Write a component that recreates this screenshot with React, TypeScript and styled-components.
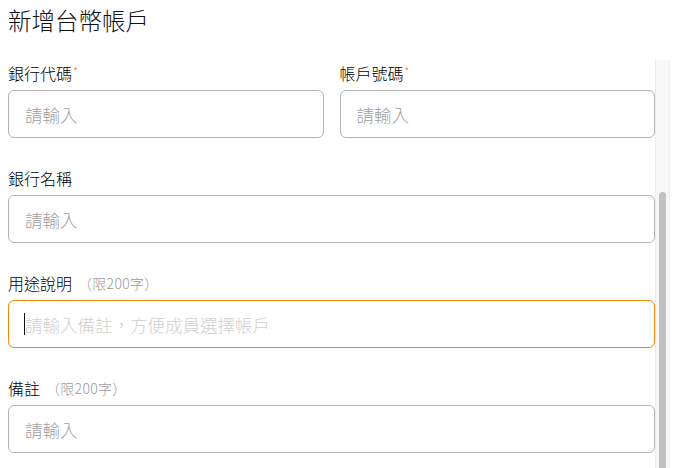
import React from 'react';
import styled, { createGlobalStyle } from 'styled-components';

const GlobalStyle = createGlobalStyle`
    html, body {
        margin: 0;
        padding: 0;
        background: #fff;
        font-family: 'Noto Sans CJK TC', 'Noto Sans', sans-serif;
        color: #222;
    }
    * {
        box-sizing: border-box;
    }
`;

const Wrapper = styled.div`
    display: flex;
    flex-direction: column;
    height: 468px;
    padding: 0 8px;
    overflow: hidden;
`;

const Header = styled.div`
    flex: 0 0 60px;
    padding-top: 4px;
`;

const Title = styled.h1`
    margin: 0;
    font-size: 23.5px;
    line-height: 32px;
    font-weight: 300;
    color: #111;
`;

const Body = styled.div`
    flex: 1;
    display: flex;
    min-height: 0;
`;

const Content = styled.div`
    flex: 1;
    padding: 2px 0 15px 0;
    overflow: hidden;
`;

const ScrollTrack = styled.div`
    flex: 0 0 15px;
    display: flex;
    flex-direction: column;
    background: #f8f8f8;
    border-left: 1px solid #ececec;
    border-right: 1px solid #f0f0f0;
`;

const ScrollThumb = styled.div<{ $offset: number }>`
    flex: 1;
    margin: ${(p) => p.$offset}px 3px 0 3px;
    background: #c1c1c1;
    border-radius: 4px 4px 0 0;
`;

const Row = styled.div`
    display: grid;
    grid-template-columns: 1fr 1fr;
    column-gap: 16px;
`;

const Field = styled.div<{ $last?: boolean }>`
    display: flex;
    flex-direction: column;
    margin-bottom: ${(p) => (p.$last ? '0' : '29px')};
`;

const Label = styled.label`
    display: flex;
    align-items: center;
    height: 22px;
    margin-bottom: 6px;
    font-size: 16px;
    line-height: 22px;
    font-weight: 300;
    color: #000;
`;

const Required = styled.span`
    align-self: flex-start;
    margin: 2px 0 0 1px;
    font-size: 11px;
    line-height: 14px;
    color: #f27a3c;
`;

const Hint = styled.span`
    margin-left: 6px;
    font-size: 14px;
    font-weight: 300;
    letter-spacing: 0.3px;
    color: #9a9a9a;
`;

const InputBox = styled.div<{ $focused?: boolean }>`
    position: relative;
    height: 48px;
    border: 1px solid ${(p) => (p.$focused ? '#ef8a0c' : '#b4b4b4')};
    border-radius: 6px;
    background: #fff;
`;

const Input = styled.input<{ $light?: boolean }>`
    width: 100%;
    height: 100%;
    border: none;
    outline: none;
    background: transparent;
    padding: 0 16px;
    font-family: inherit;
    font-size: 17.5px;
    font-weight: 300;
    color: #222;

    &::placeholder {
        color: ${(p) => (p.$light ? '#d0d0d0' : '#9e9e9e')};
    }
`;

const Caret = styled.span`
    position: absolute;
    left: 15px;
    top: 12px;
    width: 1px;
    height: 22px;
    background: #111;
`;

type FieldProps = {
    label: string;
    required?: boolean;
    hint?: string;
    placeholder?: string;
    focused?: boolean;
    last?: boolean;
};

const FormField = ({ label, required, hint, placeholder = '請輸入', focused, last }: FieldProps) => (
    <Field $last={last}>
        <Label>
            {label}
            {required && <Required>*</Required>}
            {hint && <Hint>{hint}</Hint>}
        </Label>
        <InputBox $focused={focused}>
            <Input placeholder={placeholder} $light={focused} />
            {focused && <Caret />}
        </InputBox>
    </Field>
);

const App = () => (
    <>
        <GlobalStyle />
        <Wrapper>
            <Header>
                <Title>新增台幣帳戶</Title>
            </Header>
            <Body>
                <Content>
                    <Row>
                        <FormField label="銀行代碼" required />
                        <FormField label="帳戶號碼" required />
                    </Row>
                    <FormField label="銀行名稱" />
                    <FormField
                        label="用途說明"
                        hint="（限200字）"
                        placeholder="請輸入備註，方便成員選擇帳戶"
                        focused
                    />
                    <FormField label="備註" hint="（限200字）" last />
                </Content>
                <ScrollTrack>
                    <ScrollThumb $offset={132} />
                </ScrollTrack>
            </Body>
        </Wrapper>
    </>
);

export default App;
